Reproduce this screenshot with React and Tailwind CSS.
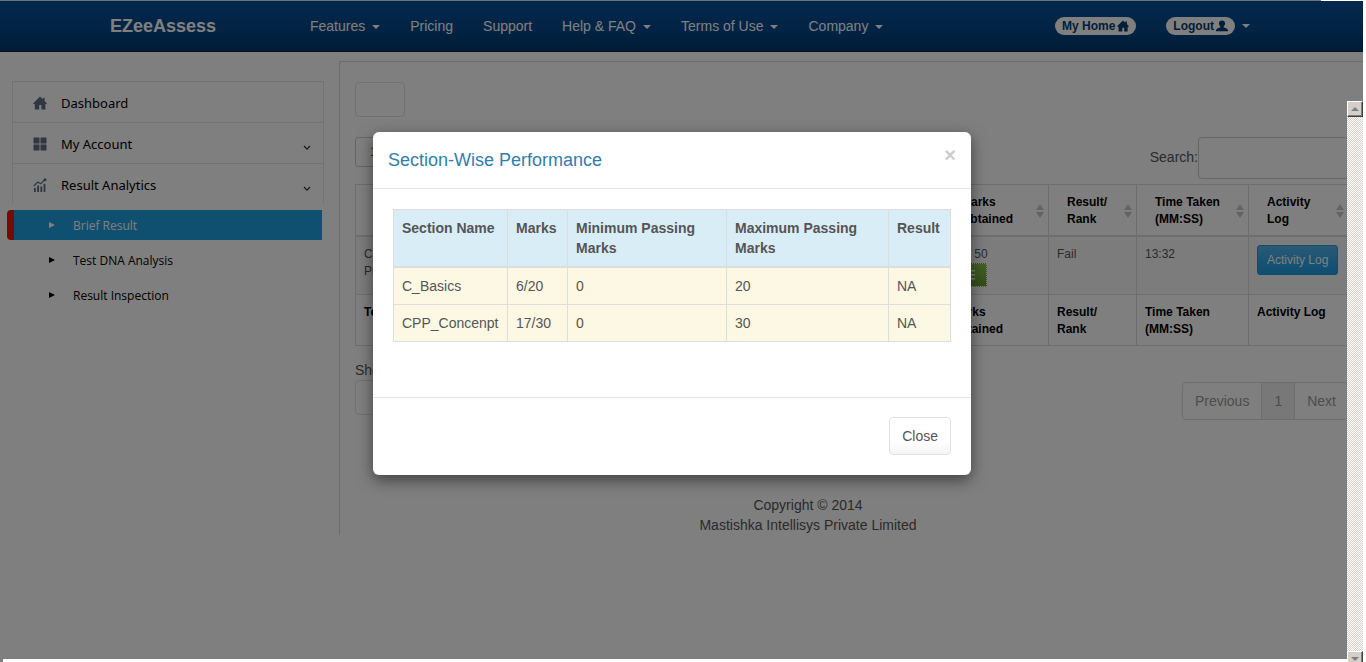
import React from "react";

const SANS = "font-['Liberation_Sans',Arial,sans-serif]";

function Caret() {
  return <span className="ml-[7px] inline-block border-x-4 border-t-4 border-x-transparent border-t-current align-middle" />;
}

function HomeGlyph({ className }) {
  return (
    <svg viewBox="0 0 14 14" className={className} fill="currentColor" aria-hidden="true">
      <path d="M7 0.6 L9.8 3.2 V1.8 H11.6 V4.9 L14 7.4 L13.4 8 H12.4 V13.4 H8.4 V9 H6.2 V13.4 H1.8 V8 H0.7 L0 7.4 Z" />
    </svg>
  );
}

function UserGlyph({ className }) {
  return (
    <svg viewBox="0 0 14 14" className={className} fill="currentColor" aria-hidden="true">
      <path d="M7 0.6 C9.2 0.6 10.7 2 10.6 4.2 C10.5 5.8 9.7 7 8.8 7.8 V8.6 L12.4 10 C13.6 10.5 14 11.4 14 13.2 H0 C0 11.4 0.4 10.5 1.6 10 L5.2 8.6 V7.8 C4.3 7 3.5 5.8 3.4 4.2 C3.3 2 4.8 0.6 7 0.6 Z" />
    </svg>
  );
}

function TilesGlyph({ className }) {
  return (
    <svg viewBox="0 0 14 14" className={className} fill="currentColor" aria-hidden="true">
      <path d="M0.5 0.5h6v6h-6zM7.5 0.5h6v6h-6zM0.5 7.5h6v6h-6zM7.5 7.5h6v6h-6z" />
    </svg>
  );
}

function ChartGlyph({ className }) {
  return (
    <svg viewBox="0 0 14 14" className={className} aria-hidden="true">
      <path d="M1 10h1.8v4H1zM4.2 7.6H6V14H4.2zM7.4 8.6h1.8V14H7.4zM10.6 5.8h1.8V14h-1.8z" fill="currentColor" />
      <path d="M0.8 8 L4.8 4 L7.6 5.8 L12 1.6" fill="none" stroke="currentColor" strokeWidth="1.2" />
      <circle cx="12" cy="1.7" r="1.5" fill="currentColor" />
    </svg>
  );
}

function Chevron() {
  return (
    <svg viewBox="0 0 8 6" className="mt-2.5 h-1.5 w-2 text-[#333]" fill="none" stroke="currentColor" strokeWidth="1.2" aria-hidden="true">
      <path d="M1 1 L4 4.2 L7 1" />
    </svg>
  );
}

const NAV = [
  ["Features", true],
  ["Pricing", false],
  ["Support", false],
  ["Help & FAQ", true],
  ["Terms of Use", true],
  ["Company", true],
];

function TopBar() {
  return (
    <header className="border-t border-b border-t-[#d5e6f8] border-b-[#022241] bg-linear-to-b from-[#04519b] via-[#044687] via-60% to-[#033769] pr-[3px] text-white">
      <div className="mx-auto flex h-[50px] max-w-[1170px] items-center px-[15px]">
        <a href="#home" className="w-[200px] text-lg font-bold">EZeeAssess</a>
        <nav className="flex gap-[30px] text-sm">
          {NAV.map(([label, menu]) => (
            <a key={label} href="#nav" className="whitespace-nowrap">
              {label}
              {menu && <Caret />}
            </a>
          ))}
        </nav>
        <div className="ml-auto flex items-center gap-[30px] text-xs font-bold">
          <a href="#my-home" className="flex h-[18px] items-center gap-0.5 rounded-full bg-white px-[7px] text-[#033c73]">
            My Home
            <HomeGlyph className="size-3" />
          </a>
          <div className="flex items-center">
            <a href="#logout" className="flex h-[18px] items-center gap-0.5 rounded-full bg-white px-[7px] text-[#033c73]">
              Logout
              <UserGlyph className="size-3" />
            </a>
            <Caret />
          </div>
        </div>
      </div>
    </header>
  );
}

const MENU = [
  ["Dashboard", HomeGlyph, false],
  ["My Account", TilesGlyph, true],
  ["Result Analytics", ChartGlyph, true],
];

const SUBMENU = ["Brief Result", "Test DNA Analysis", "Result Inspection"];

function Sidebar() {
  return (
    <aside className="w-[339px] shrink-0 pt-[29px] pr-[15px] pl-[7px] font-['Noto_Sans','Open_Sans',sans-serif] text-black">
      <ul className="ml-[5px] border-x border-[#e6e6e6]">
        {MENU.map(([label, Icon, open]) => (
          <li key={label} className="border-t border-[#e6e6e6]">
            <a href="#menu" className="flex h-10 items-center pr-3 pl-5 text-[13px]">
              <Icon className="mt-0.5 mr-3.5 size-3.5 text-[#5f6f82]" />
              <span className="flex-1 pt-1">{label}</span>
              {open && <Chevron />}
            </a>
          </li>
        ))}
      </ul>
      <ul className="mt-1.5 mr-0.5 flex flex-col gap-[5px] font-['Open_Sans','Noto_Sans',sans-serif] text-xs">
        {SUBMENU.map((label, i) => (
          <li key={label}>
            <a
              href="#sub"
              className={
                i === 0
                  ? "flex h-[30px] items-center rounded-l border-l-[7px] border-[#e81800] bg-[#1f9fe0] pl-[35px] text-white"
                  : "flex h-[30px] items-center border-l-[7px] border-transparent pl-[35px]"
              }
            >
              <span className="mr-[18px] border-y-[3px] border-l-[6px] border-y-transparent border-l-current" />
              <span className="pt-0.5">{label}</span>
            </a>
          </li>
        ))}
      </ul>
    </aside>
  );
}

function SortArrows() {
  return (
    <svg viewBox="0 0 8 14" className="h-3.5 w-2 shrink-0 text-[#c8c8c8]" fill="currentColor" aria-hidden="true">
      <path d="M4 0 L8 6 H0 Z M0 8 H8 L4 14 Z" />
    </svg>
  );
}

const COLUMNS = [
  ["Test Name", ""],
  ["Marks", "Obtained"],
  ["Result/", "Rank"],
  ["Time Taken", "(MM:SS)"],
  ["Activity", "Log"],
];

function ResultsTable() {
  return (
    <table className="w-full table-fixed border-collapse border border-[#ddd] text-xs leading-[17px] text-[#555]">
      <colgroup>
        <col />
        <col className="w-[106px]" />
        <col className="w-[88px]" />
        <col className="w-[112px]" />
        <col className="w-[100px]" />
      </colgroup>
      <thead>
        <tr className="border-b-2 border-[#ddd] text-left text-black">
          {COLUMNS.map(([a, b]) => (
            <th key={a} className="border-x border-[#ddd] pt-[9px] pr-1 pb-[7px] pl-[18px]">
              <div className="flex items-center justify-between">
                <span>
                  {a}
                  <br />
                  {b}
                </span>
                <SortArrows />
              </div>
            </th>
          ))}
        </tr>
      </thead>
      <tbody>
        <tr className="border-b border-[#ddd] bg-[#f9f9f9] align-top">
          <td className="border-x border-[#ddd] px-2 pt-[9px] pb-[7px]">
            C_CPP
            <br />
            Programming
          </td>
          <td className="border-x border-[#ddd] px-2 pt-[9px] pb-[7px]">
            23 / 50
            <button type="button" aria-label="Section marks" className="flex h-6 w-9 items-center justify-center border border-dotted border-white bg-linear-to-b from-[#88c149] to-[#699934] text-white">
              <svg viewBox="0 0 12 12" className="size-3" fill="currentColor" aria-hidden="true">
                <path d="M0 1h12v1.6H0zM0 5h12v1.6H0zM0 9h12v1.6H0z" />
              </svg>
            </button>
          </td>
          <td className="border-x border-[#ddd] px-2 pt-[9px] pb-[7px]">Fail</td>
          <td className="border-x border-[#ddd] px-2 pt-[9px] pb-[7px]">13:32</td>
          <td className="border-x border-[#ddd] p-2">
            <button type="button" className="h-[30px] rounded-[3px] border border-[#1d9ce5] bg-linear-to-b from-[#54b4eb] via-[#2fa4e7] via-60% to-[#1d9ce5] px-[9px] whitespace-nowrap text-white">
              Activity Log
            </button>
          </td>
        </tr>
      </tbody>
      <tfoot>
        <tr className="text-left align-top text-black">
          <th className="border-x border-[#ddd] px-2 pt-[9px] pb-[7px]">Test Name</th>
          <th className="border-x border-[#ddd] px-2 pt-[9px] pb-[7px]">Marks<br />Obtained</th>
          <th className="border-x border-[#ddd] px-2 pt-[9px] pb-[7px]">Result/<br />Rank</th>
          <th className="border-x border-[#ddd] px-2 pt-[9px] pb-[7px]">Time Taken<br />(MM:SS)</th>
          <th className="border-x border-[#ddd] px-2 pt-[9px] pb-[7px]">Activity Log</th>
        </tr>
      </tfoot>
    </table>
  );
}

function Content() {
  return (
    <main className="mt-[9px] min-w-0 flex-1 border-t border-l border-[#d4dade] pt-5 pl-[15px] text-sm text-[#555]">
      <div className="pr-3.5">
        <button type="button" aria-label="Export" className="block h-[35px] w-[50px] rounded border border-[#e2e2e2]" />
        <div className="mt-5 mb-[5px] flex items-start justify-between">
          <select aria-label="Rows per page" defaultValue="10" className="h-[30px] w-[75px] appearance-none rounded-[3px] border border-[#ccc] px-3.5 text-xs">
            <option>10</option>
            <option>25</option>
          </select>
          <label className="flex items-start leading-10">
            Search:
            <input type="search" className="h-[42px] w-[151px] rounded border border-[#ccc] px-3" />
          </label>
        </div>
        <ResultsTable />
        <div className="mt-3.5 flex items-start justify-between">
          <div>
            <p className="leading-5">Showing 1 to 1 of 1 entries</p>
            <button type="button" aria-label="Export rows" className="block h-[35px] w-[50px] rounded border border-[#e2e2e2]" />
          </div>
          <div className="mt-[22px] flex h-[38px] rounded border border-[#ddd] leading-5 text-[#999]">
            <button type="button" className="px-3">Previous</button>
            <button type="button" className="border-x border-[#ddd] bg-[#f0f0f0] px-3">1</button>
            <button type="button" className="px-3">Next</button>
          </div>
        </div>
      </div>
      <footer className="mt-[75px] max-w-[906px] text-center leading-5">
        Copyright © 2014
        <br />
        Mastishka Intellisys Private Limited
      </footer>
    </main>
  );
}

const SECTIONS = [
  ["C_Basics", "6/20", "0", "20", "NA"],
  ["CPP_Concenpt", "17/30", "0", "30", "NA"],
];

function PerformanceDialog() {
  return (
    <div role="dialog" aria-labelledby="dialog-title" className="w-[598px] rounded-md bg-white text-sm leading-5 text-[#555] shadow-[0_5px_15px_rgba(0,0,0,0.5)]">
      <div className="flex h-[57px] items-center justify-between border-b border-[#e5e5e5] px-[15px]">
        <h4 id="dialog-title" className="text-lg text-[#317eac]">Section-Wise Performance</h4>
        <button type="button" aria-label="Close dialog" className="mb-2.5 text-xl leading-5 font-bold text-[#ccc]">×</button>
      </div>
      <div className="px-5 pt-5 pb-[55px]">
        <table className="w-full table-fixed border-collapse border border-[#ddd] text-left">
          <colgroup>
            <col className="w-[114px]" />
            <col className="w-[60px]" />
            <col className="w-[159px]" />
            <col />
            <col className="w-[62px]" />
          </colgroup>
          <thead>
            <tr className="border-b-2 border-[#ddd] bg-[#d9edf7] align-top">
              {["Section Name", "Marks", "Minimum Passing Marks", "Maximum Passing Marks", "Result"].map((h) => (
                <th key={h} className="border-x border-[#ddd] py-2 pr-1 pl-2">{h}</th>
              ))}
            </tr>
          </thead>
          <tbody>
            {SECTIONS.map((row) => (
              <tr key={row[0]} className="border-b border-[#ddd] bg-[#fcf8e3]">
                {row.map((cell, i) => (
                  <td key={i} className="border-x border-[#ddd] py-2 pr-1 pl-2">{cell}</td>
                ))}
              </tr>
            ))}
          </tbody>
        </table>
      </div>
      <div className="flex justify-end border-t border-[#e5e5e5] px-5 pt-[19px] pb-5">
        <button type="button" className="h-[38px] rounded border border-[#e2e2e2] bg-linear-to-b from-white via-white via-60% to-[#f5f5f5] px-3">Close</button>
      </div>
    </div>
  );
}

function ScrollTrack() {
  const button = "flex size-4 shrink-0 items-center justify-center border border-t-white border-l-white border-r-[#404040] border-b-[#404040] bg-[#d4d0c8] shadow-[inset_-1px_-1px_0_#808080]";
  return (
    <div className="absolute top-[101px] right-[3px] bottom-0 flex w-4 flex-col justify-between overflow-hidden bg-[repeating-conic-gradient(#d4d0c8_0_25%,#ffffff_0_50%)] bg-size-[2px_2px]">
      <button type="button" aria-label="Scroll up" className={button}>
        <span className="border-x-4 border-b-4 border-x-transparent border-b-[#808080]" />
      </button>
      <button type="button" aria-label="Scroll down" className={button + " -mb-[5px]"}>
        <span className="border-x-4 border-t-4 border-x-transparent border-t-[#808080]" />
      </button>
    </div>
  );
}

export default function App() {
  return (
    <div className={"relative flex min-h-screen flex-col overflow-hidden bg-white pr-[3px] pb-[3px] " + SANS}>
      <div className="relative flex-1">
        <TopBar />
        <div className="flex">
          <Sidebar />
          <Content />
        </div>
        <div className="absolute inset-0 flex items-start justify-center bg-black/50 pt-[132px] pr-[19px]">
          <PerformanceDialog />
        </div>
        <div className="absolute top-0 right-0 h-px w-[42px] bg-white" />
      </div>
      <div className="absolute bottom-0 left-0 size-[3px] bg-[#808080]" />
      <ScrollTrack />
    </div>
  );
}
